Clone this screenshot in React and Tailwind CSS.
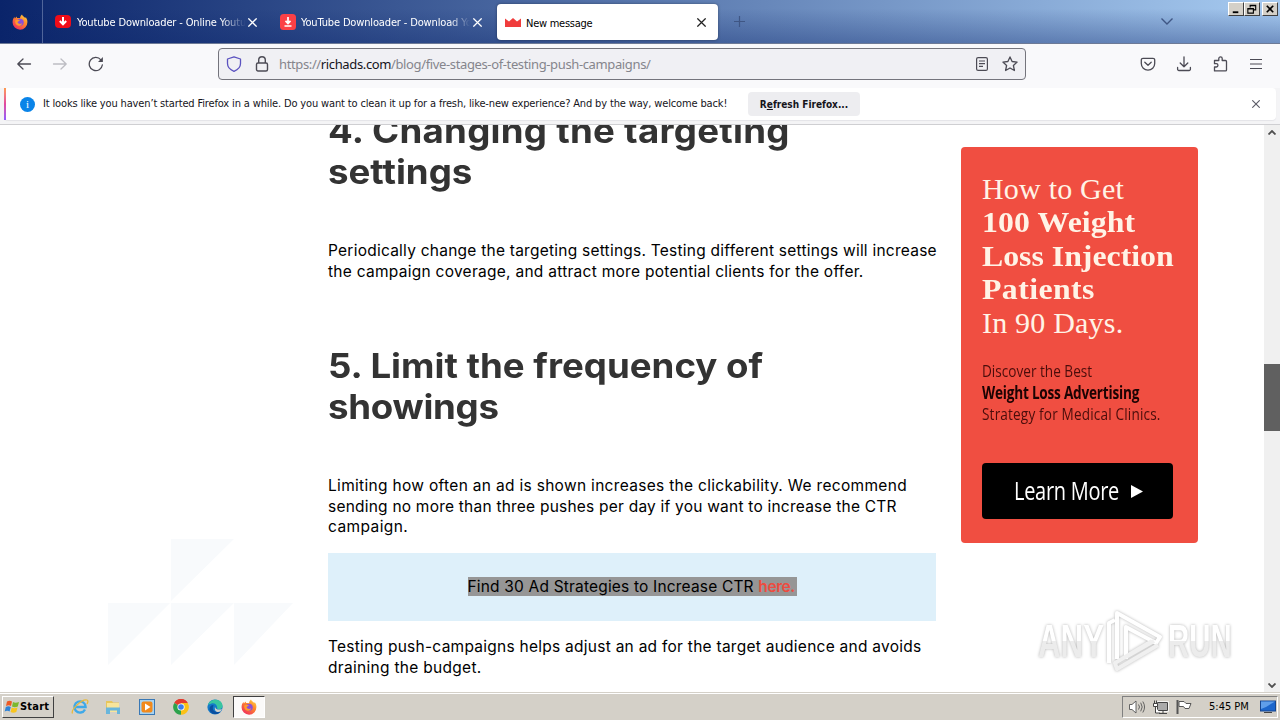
import { Fragment } from 'react';

const ui = "font-['DejaVu_Sans_Condensed','DejaVu_Sans',sans-serif] [font-stretch:condensed] tracking-[-0.147px]";

function FirefoxLogo({ size = 16 }) {
  return (
    <svg width={size} height={size} viewBox="0 0 16 16" className="shrink-0">
      <defs>
        <linearGradient id="ffOuter" x1="1" y1="0" x2="0.3" y2="1">
          <stop offset="0" stopColor="#ffe04a" />
          <stop offset="0.45" stopColor="#ff8a2a" />
          <stop offset="1" stopColor="#f0305c" />
        </linearGradient>
      </defs>
      <path d="M10 0.4c.4 1.5 2 2.200 3 3.400l1-.3c1 1.500 1.500 3 1.400 4.800A7.400 7.400 0 0 1 .6 8.400C.5 6 1.300 4.200 2.500 3l.4 1.600L4.600 2.500l.5 1.600c1-.3 2-.2 2.900.2C8 2.600 9 1.200 10 .4z" fill="url(#ffOuter)" />
      <circle cx="8.200" cy="8.300" r="3.500" fill="#8a4fd8" />
      <path d="M3.200 6.500c1.500-1 3.500-.8 4.900.2-1.500.1-1.800 1-2.600 1.600 1 2 3.300 2 4.700.7-.5 2.400-2.600 3.300-4.500 2.600C3.700 10.800 2.800 8.600 3.200 6.500z" fill="#ff9a2c" />
    </svg>
  );
}

function Cross({ size = 8, className }) {
  return (
    <svg width={size} height={size} viewBox="0 0 8 8" className={className} fill="none" stroke="currentColor" strokeWidth="1.1">
      <path d="M0.300 0.300 7.700 7.700M7.700 0.300 0.300 7.700" />
    </svg>
  );
}

function TitleBar() {
  return (
    <header className={`flex h-[44px] shrink-0 border-b border-[#6d7a96] bg-[linear-gradient(to_bottom,rgba(10,36,106,0)_20%,rgba(10,36,106,0.35)_100%),linear-gradient(to_right,#0a246a,#a6caf0)] text-[11px] text-white ${ui}`}>
      <div className="flex w-[43px] items-center border-r border-[#50659a] pl-[12px]">
        <FirefoxLogo />
      </div>
      <div className="flex w-[226px] items-center pt-[1px] pl-[12px]">
        <svg width="16" height="14" viewBox="0 0 16 14">
          <rect width="16" height="13" rx="4" fill="#f00c18" />
          <path d="M8 2v7M4.800 6 8 9.300 11.200 6" stroke="#fff" strokeWidth="2" fill="none" />
        </svg>
        <span className="ml-[6px] w-[169px] overflow-hidden pt-[3px] whitespace-nowrap [mask-image:linear-gradient(to_right,#000_85%,transparent)]">Youtube Downloader - Online Youtube</span>
        <Cross className="ml-[2px]" size={9} />
      </div>
      <div className="flex w-[228px] items-center pt-[1px] pl-[11px]">
        <svg width="16" height="16" viewBox="0 0 16 16">
          <rect width="16" height="16" rx="3.500" fill="#fb4046" />
          <path d="M8 3v6M5.500 6.800 8 9.400l2.500-2.600M4.500 12h7" stroke="#fff" strokeWidth="1.700" fill="none" />
        </svg>
        <span className="ml-[5px] w-[169px] overflow-hidden pt-[3px] whitespace-nowrap [mask-image:linear-gradient(to_right,#000_88%,transparent)]">YouTube Downloader - Download YouTube</span>
        <Cross className="ml-[3px]" size={9} />
      </div>
      <div className="mt-[4px] flex h-[36px] w-[221px] items-center rounded-[4px] bg-white pl-[8px] text-black shadow-[0_0_3px_rgba(0,0,0,0.4)]">
        <svg width="16" height="9" viewBox="0 0 16 9">
          <path d="M0 0.500 4 3.500 8 0l4 3.500 4-3V9H0z" fill="#f03c3c" />
        </svg>
        <span className="ml-[5px] w-[171px] pt-[4px] tracking-[-0.25px]">New message</span>
        <Cross className="text-[#222]" size={9} />
      </div>
      <div className="flex flex-1 items-center justify-between pl-[16px] text-[#3f5684]">
        <svg width="11" height="11" viewBox="0 0 11 11" stroke="currentColor" strokeWidth="1.200"><path d="M5.500 0v11M0 5.500h11" /></svg>
        <svg width="12" height="7" viewBox="0 0 12 7" className="mr-[12px] ml-auto" fill="none" stroke="currentColor" strokeWidth="1.400"><path d="M.5.500 6 6 11.500.5" /></svg>
      </div>
      <div className="flex w-[95px] items-start justify-end pt-[2px] pr-[2px] text-black">
        {[
          <path key="a" d="M4 10h6" strokeWidth="2" />,
          <path key="b" d="M5.500 5V2.500h6v5H9M3 6h6v5H3zM3 6.500h6M5.500 3h6" strokeWidth="1.200" />,
          <path key="c" d="M4 3l7 7M11 3l-7 7" strokeWidth="1.800" />,
        ].map((d, i) => (
          <Fragment key={i}>
            {i === 2 && <span className="w-[2px]" />}
            <span className="h-[14px] w-[16px] border border-t-white border-r-[#404040] border-b-[#404040] border-l-white bg-[#d4d0c8]">
              <svg width="14" height="12" viewBox="0 0 15 13" fill="none" stroke="#000">{d}</svg>
            </span>
          </Fragment>
        ))}
      </div>
    </header>
  );
}

function Toolbar() {
  return (
    <div className="flex h-[44px] shrink-0 items-start bg-[#f9f9fb] text-[#4c4b55]">
      <div className="flex h-[40px] w-[218px] items-center gap-[20px] pl-[16px]">
        <svg width="16" height="16" viewBox="0 0 16 16" fill="none" stroke="currentColor" strokeWidth="1.300" strokeLinecap="round" strokeLinejoin="round"><path d="M14.500 8H1.800M7 3 1.800 8 7 13" /></svg>
        <svg width="16" height="16" viewBox="0 0 16 16" fill="none" stroke="#bdbdc3" strokeWidth="1.300" strokeLinecap="round" strokeLinejoin="round"><path d="M1.500 8h12.700M9 3l5.200 5L9 13" /></svg>
        <svg width="16" height="16" viewBox="0 0 16 16" fill="none" stroke="currentColor" strokeWidth="1.300" strokeLinecap="round"><path d="M14.400 8.800A6.600 6.600 0 1 1 12.900 3.800" /><path d="M14.900 1v5H10z" fill="currentColor" stroke="none" /></svg>
      </div>
      <div className="mt-[4px] flex h-[32px] w-[808px] items-center rounded-[4px] border border-[#74747c] bg-[#f0f0f4]">
        <svg width="16" height="16" viewBox="0 0 16 16" className="ml-[7px]" fill="none" stroke="#5b52c0" strokeWidth="1.300" strokeLinejoin="round"><path d="M8 .8 14.500 3v4.500c0 3.500-2.500 6.200-6.500 7.800C4 13.700 1.500 11 1.500 7.500V3z" /></svg>
        <svg width="14" height="16" viewBox="0 0 14 16" className="ml-[13px]" fill="none" stroke="currentColor" strokeWidth="1.400"><rect x="1.500" y="7" width="11" height="8" rx="1.500" /><path d="M3.700 7V4a3.300 3.300 0 0 1 6.600 0v3" /></svg>
        <span className="ml-[10px] flex-1 pt-px font-['Noto_Sans',sans-serif] text-[13px] tracking-[-0.370px] text-[#85858c]">https://<span className="text-[#15141a]">richads.com</span>/blog/five-stages-of-testing-push-campaigns/</span>
        <svg width="12" height="14" viewBox="0 0 12 14" className="mr-[14px]" fill="none" stroke="currentColor" strokeWidth="1.200"><rect x=".6" y=".6" width="10.800" height="12.800" rx="1.500" /><path d="M3 4h6M3 6.700h6M3 9.400h4" /></svg>
        <svg width="16" height="16" viewBox="0 0 16 16" className="mr-[7px]" fill="none" stroke="currentColor" strokeWidth="1.300" strokeLinejoin="round"><path d="M8 .9 10.100 5.500l5 .6-3.700 3.400 1 5L8 12l-4.400 2.500 1-5L.9 6.100l5-.6z" /></svg>
      </div>
      <div className="flex h-[40px] flex-1 items-center justify-end gap-[20px] pr-[16px]">
        <svg width="16" height="16" viewBox="0 0 16 16" fill="none" stroke="currentColor" strokeWidth="1.300" strokeLinejoin="round" strokeLinecap="round"><path d="M3 2.300h10a1.700 1.700 0 0 1 1.700 1.700v3.500a6.700 6.700 0 0 1-13.400 0V4A1.700 1.700 0 0 1 3 2.300z" /><path d="M4.800 6.300 8 9.300l3.200-3" /></svg>
        <svg width="16" height="16" viewBox="0 0 16 16" fill="none" stroke="currentColor" strokeWidth="1.300" strokeLinejoin="round" strokeLinecap="round"><path d="M8 .8v10M4.200 7 8 10.800 11.800 7M1.600 11.500v1.700a1.300 1.300 0 0 0 1.300 1.300h10.200a1.300 1.300 0 0 0 1.300-1.300v-1.700" /></svg>
        <svg width="17" height="16" viewBox="0 0 17 16" fill="none" stroke="currentColor" strokeWidth="1.300" strokeLinejoin="round"><path d="M2.500 14.900V11h1.800a1.600 1.600 0 0 0 0-3.300H2.500V4.500h4.300V2.600a1.700 1.700 0 0 1 3.400 0v1.900h3.300a1 1 0 0 1 1 1v8.400a1 1 0 0 1-1 1z" /></svg>
        <svg width="16" height="16" viewBox="0 0 16 16" fill="none" stroke="currentColor" strokeWidth="1.200" className="-ml-px"><path d="M2 3.500h12M2 8h12M2 12.500h12" /></svg>
      </div>
    </div>
  );
}

function Notice() {
  return (
    <div className="flex h-[37px] shrink-0 items-start border-b border-[#cfcfd2] bg-[#f4f4f6] pl-[4px]">
      <div className={`flex h-[32px] w-[1272px] items-center rounded-[4px] bg-white text-[11px] text-[#15141a] shadow-[0_1px_1px_#e4e4e8] ${ui}`}>
        <span className="h-full w-[2px] bg-gradient-to-b from-[#ff9a4d] via-[#e2479e] to-[#9059ff]" />
        <span className="ml-[14px] flex size-[15px] items-center justify-center rounded-full bg-[#0a84e8] font-['Liberation_Serif',serif] text-[11px] leading-none text-white">i</span>
        <span className="ml-[8px] w-[705px] whitespace-nowrap">It looks like you haven’t started Firefox in a while. Do you want to clean it up for a fresh, like-new experience? And by the way, welcome back!</span>
        <button className="h-[24px] w-[112px] rounded-[4px] bg-[#ededf0] text-[10px] font-bold tracking-normal whitespace-nowrap">R<span className="underline">e</span>fresh Firefox...</button>
        <Cross className="mr-[16px] ml-auto text-[#5b5b66]" />
      </div>
    </div>
  );
}

function Article() {
  const heading = 'origin-left scale-x-[1.078] text-[34px] leading-[41px] font-bold whitespace-nowrap text-[#333]';
  const para = 'text-[15.5px] leading-[20.6px] tracking-[0.24px] whitespace-nowrap text-black';
  return (
    <article className="ml-[328px] w-[608px] shrink-0 font-['Inter',sans-serif]">
      <h2 className={`-mt-[15px] ${heading}`}>
        <span className="tracking-[0.24px]">4. Changing the targeting</span><br />settings
      </h2>
      <p className={`mt-[49px] ${para}`}>
        <span>Periodically change the targeting settings. Testing different settings will increase</span><br />
        <span className="tracking-[0.27px]">the campaign coverage, and attract more potential clients for the offer.</span>
      </p>
      <h2 className={`mt-[63px] ${heading}`}>
        <span>5. Limit the frequency of</span><br /><span className="tracking-[-0.25px]">showings</span>
      </h2>
      <p className={`mt-[49px] ${para}`}>
        <span className="tracking-[0.31px]">Limiting how often an ad is shown increases the clickability. We recommend</span><br />
        <span className="tracking-[0.22px]">sending no more than three pushes per day if you want to increase the CTR</span><br />
        <span className="tracking-[0.4px]">campaign.</span>
      </p>
      <div className="mt-[15px] flex h-[68px] items-center justify-center bg-[#def0fa] text-[15.5px] tracking-[0.18px] whitespace-nowrap text-black">
        <span className="h-[19px] w-[329px] bg-[#969696] leading-[20px]">Find 30 Ad Strategies to Increase CTR <a className="font-semibold tracking-[-0.4px] text-[#ee4b40]">here.</a></span>
      </div>
      <p className={`mt-[16px] ${para}`}>
        <span className="tracking-[0.26px]">Testing push-campaigns helps adjust an ad for the target audience and avoids</span><br />
        <span className="tracking-[0.3px]">draining the budget.</span>
      </p>
    </article>
  );
}

function Ad() {
  return (
    <aside className="mt-[22px] ml-[25px] h-[396px] w-[237px] shrink-0 rounded-[4px] bg-[#f04e41] pt-[25px] pl-[21px] whitespace-nowrap">
      <div className="font-['Liberation_Serif',serif] text-[30px] leading-[33.4px] tracking-[0.2px] text-[#fff3e6]">
        <div>How to Get</div>
        <div className="origin-left scale-x-[1.06] font-bold tracking-[0.1px]">100 Weight</div>
        <div className="origin-left scale-x-[1.06] font-bold tracking-normal">Loss Injection</div>
        <div className="origin-left scale-x-[1.06] font-bold tracking-[0.4px]">Patients</div>
        <div>In 90 Days.</div>
      </div>
      <div className="mt-[21px] origin-left scale-x-[0.8] font-['Open_Sans',sans-serif] text-[17px] leading-[21.500px] text-[#4a0d0b]">
        <div>Discover the Best</div>
        <div className="font-bold tracking-[-0.27px] text-[#1c0303]">Weight Loss Advertising</div>
        <div className="tracking-[0.2px]">Strategy for Medical Clinics.</div>
      </div>
      <div className="mt-[38px] flex h-[56px] w-[191px] items-center rounded-[4px] bg-black pl-[32px] text-white">
        <span className="w-[117px] font-['Open_Sans',sans-serif] text-[25px] tracking-[-0.35px]"><span className="inline-block origin-left scale-x-[0.8]">Learn More</span></span>
        <svg width="12" height="13" viewBox="0 0 12 13" className="mt-[2px]"><path d="M0 0 12 6.500 0 13z" fill="#fff" /></svg>
      </div>
    </aside>
  );
}

function Watermark() {
  return (
    <div className="absolute top-[484px] left-[1038px] flex h-[64px] w-[200px] items-center font-['Liberation_Sans_Narrow','Liberation_Sans',sans-serif] text-[46px] leading-none text-white [filter:drop-shadow(0_0_1.5px_#b4b4b4)]">
      <span className="w-[68px]"><span className="inline-block origin-left scale-x-[0.68] bg-gradient-to-b from-white from-50% to-[#ececec] to-50% bg-clip-text font-bold text-transparent">ANY</span></span>
      <svg width="62" height="64" viewBox="0 0 62 64" fill="none" stroke="#fff" strokeWidth="4" strokeLinejoin="round" className="shrink-0">
        <path d="M3 54V14l6-3M11 50V4l43 24-4 6-30-16v32" />
        <path d="M52 36 11 60l-2-6 37-22M20 48l28-16" stroke="#f0f0f0" />
      </svg>
      <span className="inline-block origin-left scale-x-[0.64] bg-gradient-to-b from-white from-50% to-[#ececec] to-50% bg-clip-text font-bold text-transparent">RUN</span>
    </div>
  );
}

function Page() {
  return (
    <main className="relative flex h-[567px] shrink-0 overflow-hidden bg-white">
      <svg width="190" height="130" viewBox="0 0 190 130" className="absolute top-[413px] left-[107px]" fill="#f8fafc">
        <path d="M64 1h63L64 63zM1 65h62L1 127zM64 65h63l-63 62zM127 65h59l-59 62z" />
      </svg>
      <Article />
      <Ad />
      <Watermark />
      <div className="ml-auto flex w-[16px] flex-col items-center bg-[#f0f0f0] pt-[5px] pb-[4px] text-[#505050]">
        <svg width="8" height="5" viewBox="0 0 8 5" fill="none" stroke="currentColor" strokeWidth="1.800"><path d="M.5 4.500 4 1l3.500 3.500" /></svg>
        <div className="mt-[229px] h-[67px] w-full bg-[#606060]" />
        <svg width="8" height="5" viewBox="0 0 8 5" className="mt-auto" fill="none" stroke="currentColor" strokeWidth="1.800"><path d="M.5.500 4 4 7.500.5" /></svg>
      </div>
    </main>
  );
}

function Taskbar() {
  return (
    <footer className={`flex h-[28px] shrink-0 items-start border-t border-[#d4d0c8] bg-[#d4d0c8] pt-[3px] text-[11px] text-black shadow-[inset_0_1px_0_#fff] ${ui}`}>
      <div className="ml-[2px] flex h-[22px] w-[52px] items-center border border-t-white border-r-[#404040] border-b-[#404040] border-l-white pl-px font-bold">
        <svg width="16" height="14" viewBox="0 0 16 14">
          <path d="M3 1.500C5 .3 6.500.5 8 1.500L7 6C5.500 5 4 5 2 6z" fill="#ee5a24" />
          <path d="M9 2c1.500 1 3.500 1 6 0l-1.200 4.500C12 7.300 10 7.500 8 6.500z" fill="#7cb82f" />
          <path d="M1.800 7C3.500 6 5.300 6 6.800 7l-1.200 4.500C4 10.500 2.500 10.500.7 11.500z" fill="#2f83d6" />
          <path d="M7.700 7.500c1.700 1 3.600 1 5.800 0L12.300 12c-2 1-4 .9-5.700 0z" fill="#f9c51d" />
        </svg>
        <span className="pt-px tracking-[0.2px]">Start</span>
      </div>
      <div className="flex h-[22px] items-center">
        <svg width="18" height="18" viewBox="0 0 18 18" className="ml-[17px]" fill="none">
          <path d="M14 11.500A5.600 5.600 0 1 1 14.600 9H4.500" stroke="#3fa9e8" strokeWidth="2.400" />
          <path d="M1.500 15.500C-.5 12 11 .5 16 2c1.500.6.800 2.500 0 4" stroke="#e9b93a" strokeWidth="1.300" />
        </svg>
        <svg width="18" height="18" viewBox="0 0 18 18" className="ml-[15px]">
          <path d="M2 3h6l1 1.500h6V14H2z" fill="#e7c65c" /><path d="M3 5h12v9H3z" fill="#f8e59b" /><path d="M2 9.500h14V16h-3v-3.500H6V16H2z" fill="#69b6dc" />
        </svg>
        <svg width="16" height="16" viewBox="0 0 16 16" className="ml-[17px]">
          <rect x=".5" y=".5" width="15" height="15" fill="#a8d3f1" stroke="#3978b5" /><rect x="2.500" y="2.500" width="11" height="11" rx="2" fill="#f28a1c" /><path d="M6 4.500 11.500 8 6 11.500z" fill="#fff" />
        </svg>
        <svg width="16" height="16" viewBox="0 0 16 16" className="ml-[18px]">
          <path d="M8 8 1.300 4A7.700 7.700 0 0 1 14.700 4z" fill="#e33b2e" /><path d="M8 8V4h6.700A7.700 7.700 0 0 1 8 15.700z" fill="#fbc116" /><path d="M8 8v7.700A7.700 7.700 0 0 1 1.300 4z" fill="#2da24c" /><path d="M1.300 4A7.700 7.700 0 0 1 14.700 4z" fill="#e33b2e" /><circle cx="8" cy="8" r="3.600" fill="#fff" /><circle cx="8" cy="8" r="2.800" fill="#3b7ded" />
        </svg>
        <svg width="16" height="16" viewBox="0 0 16 16" className="ml-[18px]">
          <circle cx="8" cy="8" r="7.600" fill="#1379c8" /><path d="M1 6C3-1 15-1 15.600 7c0 3-3.600 4-5.600 2.500C11 7 8 3.500 4.500 4.500 2.500 5 1.500 5.500 1 6z" fill="#38c5a0" /><path d="M6 8c-1 3 2 6 7.500 4.500C11 16.500 3 16 2.500 10 2.500 8 4 6 6.500 6z" fill="#0b4f9f" /><path d="M8 8c1 3 4 3 7 2l-1.500 2.500C10 14 7 12 8 8z" fill="#d4d0c8" />
        </svg>
        <div className="ml-[10px] flex h-[22px] w-[32px] items-center justify-center border border-t-[#404040] border-r-white border-b-white border-l-[#404040] bg-[#fbfaf9]">
          <FirefoxLogo />
        </div>
      </div>
      <div className="mr-[2px] ml-auto flex h-[22px] w-[156px] items-center border border-t-[#808080] border-r-white border-b-white border-l-[#808080] pl-[5px]">
        <svg width="18" height="16" viewBox="0 0 18 16" fill="#fff" stroke="#555" strokeWidth=".9"><path d="M1.500 5.500H4L8 2v12L4 10.500H1.500z" /><path d="M10.500 5.500q2 2.500 0 5M12.700 3.700q3 4.300 0 8.600M14.800 2.500q3.500 5.500 0 11" fill="none" /></svg>
        <svg width="17" height="16" viewBox="0 0 17 16" className="ml-[6px]" fill="none" stroke="#444"><path d="M5.500 3.500h10v8h-10z" fill="#aaa" stroke="#fff" strokeWidth="2.500" /><path d="M5.500 3.500h10v8h-10zM7 14.500h8M11 12v2" fill="#aaa" /><path d="M1.500 4.500h4v3h-4zM2.500 1.500v3M4.500 1.500v3M3.500 8v6H8" fill="#fff" /></svg>
        <svg width="18" height="16" viewBox="0 0 18 16" className="ml-[6px]" fill="#fff" stroke="#555"><path d="M2.500 1v14" strokeWidth="2" /><path d="M4 2.500h5l2 2h5l-2 5h-4l-1.500-2H4z" /></svg>
        <span className="ml-[16px] pt-px tracking-normal whitespace-nowrap">5:45 PM</span>
        <svg width="16" height="14" viewBox="0 0 16 14" className="mr-[1px] ml-auto"><rect x=".5" y="1" width="15" height="10" fill="#1c66cc" stroke="#164690" /><path d="M1 1.500h14L6 7 1 9z" fill="#5f9eea" /><path d="M4 12.500h8" stroke="#444" /></svg>
      </div>
    </footer>
  );
}

export default function App() {
  return (
    <div className="flex h-[720px] w-[1280px] flex-col overflow-hidden bg-white">
      <TitleBar />
      <Toolbar />
      <Notice />
      <Page />
      <Taskbar />
    </div>
  );
}
